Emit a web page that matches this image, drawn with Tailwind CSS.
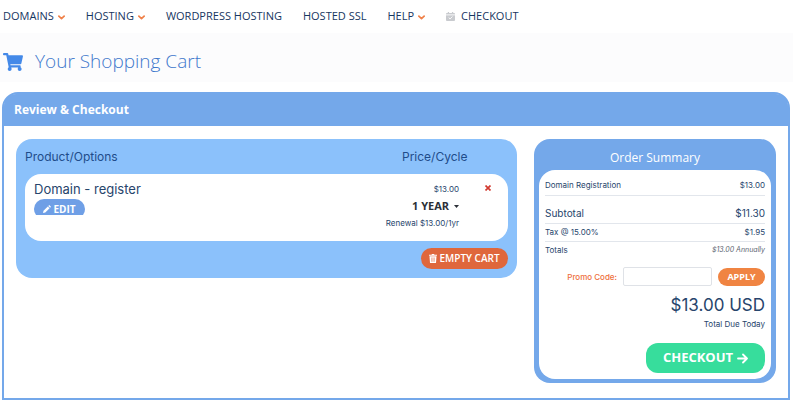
<!DOCTYPE html>
<html lang="en">
<head>
    <meta charset="UTF-8">
    <meta name="viewport" content="width=device-width, initial-scale=1.0">
    <title>Your Shopping Cart</title>
    <script src="https://cdn.jsdelivr.net/npm/@tailwindcss/browser@4"></script>
</head>
<body class="bg-white font-['Open_Sans',sans-serif] text-[#27456c]">
    <!-- Main navigation -->
    <nav class="flex h-[33px] items-center gap-[21px] pl-[3px] text-[11px] font-medium text-[#17365f]">
        <a href="#" class="flex items-center gap-1">DOMAINS
            <svg class="mt-[2px] size-[7px]" viewBox="0 0 8 8" fill="none" stroke="#f0824a" stroke-width="2" stroke-linecap="round" stroke-linejoin="round"><path d="M1 2.5 4 5.3 7 2.5"/></svg>
        </a>
        <a href="#" class="flex items-center gap-1">HOSTING
            <svg class="mt-[2px] size-[7px]" viewBox="0 0 8 8" fill="none" stroke="#f0824a" stroke-width="2" stroke-linecap="round" stroke-linejoin="round"><path d="M1 2.5 4 5.3 7 2.5"/></svg>
        </a>
        <a href="#">WORDPRESS HOSTING</a>
        <a href="#">HOSTED SSL</a>
        <a href="#" class="flex items-center gap-1">HELP
            <svg class="mt-[2px] size-[7px]" viewBox="0 0 8 8" fill="none" stroke="#f0824a" stroke-width="2" stroke-linecap="round" stroke-linejoin="round"><path d="M1 2.5 4 5.3 7 2.5"/></svg>
        </a>
        <a href="#" class="flex items-center gap-[6px]">
            <svg class="size-[9px]" viewBox="0 0 10 10"><path fill="#c9cbcf" d="M2 0h1.400v1h3.200V0H8v1h1q1 0 1 1v7q0 1-1 1H1Q0 10 0 9V2q0-1 1-1h1z"/><path d="M0 3.200h10M3 6.200l1.500 1.500L7.200 5" fill="none" stroke="#fff" stroke-width="1"/></svg>
            CHECKOUT
        </a>
    </nav>

    <!-- Page title -->
    <header class="flex h-[49px] items-center gap-3 bg-[#fcfcfd] pl-[3px] pt-2">
        <svg class="h-[18px] w-5" viewBox="0 0 576 512" fill="#4489e8"><path d="M528.120 301.319l47.273-208C578.806 78.301 567.391 64 551.990 64H159.208l-9.166-44.810C147.758 8.021 137.930 0 126.529 0H24C10.745 0 0 10.745 0 24v16c0 13.255 10.745 24 24 24h69.883l70.248 343.435C147.325 417.100 136 435.222 136 456c0 30.928 25.072 56 56 56s56-25.072 56-56c0-15.674-6.447-29.835-16.824-40h209.647C430.447 426.165 424 440.326 424 456c0 30.928 25.072 56 56 56s56-25.072 56-56c0-22.172-12.888-41.332-31.579-50.405l5.517-24.276c3.413-15.018-8.002-29.319-23.403-29.319H218.117l-6.545-32h293.145c11.206 0 20.920-7.754 23.403-18.681z"/></svg>
        <h1 class="text-[19px] font-light text-[#3f78cc]">Your Shopping Cart</h1>
    </header>

    <main class="ml-[2px] mr-[3px] mt-[10px] rounded-t-2xl border-2 border-[#74a8ea]">
        <h2 class="flex h-8 items-center rounded-t-xl bg-[#74a8ea] pl-[10px] text-xs font-bold text-white">Review &amp; Checkout</h2>

        <div class="flex items-start gap-[17px] px-3 pb-[15px] pt-[13px] font-['Inter',sans-serif]">
            <!-- Cart items -->
            <section class="flex-1 rounded-2xl bg-[#8bc1fb] px-[9px] pb-[9px]">
                <table class="w-full table-fixed">
                    <colgroup>
                        <col>
                        <col class="w-[110px]">
                        <col class="w-[49px]">
                    </colgroup>
                    <thead>
                        <tr class="h-[35px] text-xs text-[#1f4c8a]">
                            <th class="text-left font-normal">Product/Options</th>
                            <th colspan="2" class="pl-[53px] text-left font-normal">Price/Cycle</th>
                        </tr>
                    </thead>
                    <tbody>
                        <tr class="h-[67px] align-top">
                            <td class="rounded-l-2xl bg-white pl-[9px] pt-[6px]">
                                <div class="text-[13px] leading-[18px]">Domain - register</div>
                                <div class="mt-px h-4 overflow-hidden">
                                    <button class="flex h-5 w-[51px] items-center justify-center gap-[2px] rounded-full bg-[#6f9fe6] font-['Open_Sans',sans-serif] text-[10px] font-bold text-white">
                                        <svg class="size-2" viewBox="0 0 8 8" fill="#fff"><path d="M0 8 .500 5.700 4.800 1.400 6.600 3.200 2.300 7.500zM5.300.900 6.200 0 8 1.800 7.100 2.700z"/></svg>
                                        EDIT
                                    </button>
                                </div>
                            </td>
                            <td class="bg-white pt-[9px] text-right text-[8px] leading-3">
                                <div>$13.00</div>
                                <label class="my-px flex h-5 items-center justify-end gap-1 text-[#2c3038]">
                                    <select aria-label="Billing cycle" class="appearance-none font-['Open_Sans',sans-serif] text-[11px] font-bold">
                                        <option>1 YEAR</option>
                                    </select>
                                    <svg class="h-[3px] w-[5px]" viewBox="0 0 5 3" fill="currentColor"><path d="M0 0h5L2.500 3z"/></svg>
                                </label>
                                <div class="whitespace-nowrap">Renewal $13.00/1yr</div>
                            </td>
                            <td class="rounded-r-2xl bg-white pl-[10px] pt-[11px]">
                                <button aria-label="Remove" class="mx-auto block">
                                    <svg class="size-[6px]" viewBox="0 0 6 6" stroke="#d23a30" stroke-width="1.700"><path d="M.500.500l5 5m0-5-5 5"/></svg>
                                </button>
                            </td>
                        </tr>
                    </tbody>
                </table>
                <button class="ml-auto mt-[7px] flex h-[21px] w-[87px] items-center justify-center gap-[2px] rounded-full bg-[#df673c] font-['Open_Sans',sans-serif] text-[10px] font-semibold text-white">
                    <svg class="h-[9px] w-2" viewBox="0 0 8 9"><path fill="#fff" d="M0 .800h2.500L3 0h2l.500.800H8v1H0zM.500 2.300h7L7 9H1z"/><path d="M2.700 3.500v4.300M4 3.500v4.300M5.300 3.500v4.300" stroke="#df673c" stroke-width=".5"/></svg>
                    EMPTY CART
                </button>
            </section>

            <!-- Order summary -->
            <aside class="w-[242px] rounded-2xl bg-[#74a8ea] px-[5px] pb-1">
                <h3 class="flex h-[31px] items-center justify-center pt-[6px] font-['Open_Sans',sans-serif] text-xs text-white">Order Summary</h3>
                <div class="rounded-2xl bg-white px-[6px] pb-[6px] pt-[6px]">
                    <table class="w-full text-[8px]">
                        <tr class="h-[19px] border-b border-[#e2e6ec]">
                            <td>Domain Registration</td>
                            <td class="text-right">$13.00</td>
                        </tr>
                        <tr class="h-7 border-b border-[#e2e6ec] align-bottom text-[10px]">
                            <td class="pb-[2px]">Subtotal</td>
                            <td class="pb-[2px] text-right">$11.30</td>
                        </tr>
                        <tr class="h-[18px] border-b border-[#e2e6ec]">
                            <td>Tax @ 15.00%</td>
                            <td class="text-right">$1.95</td>
                        </tr>
                        <tr class="h-[18px]">
                            <td>Totals</td>
                            <td class="text-right text-[7px] italic text-[#5c6470]">$13.00 Annually</td>
                        </tr>
                    </table>
                    <form class="mt-2 flex items-center justify-end gap-[6px]">
                        <label for="promo" class="text-[8px] font-medium text-[#ee6f3c]">Promo Code:</label>
                        <input id="promo" type="text" class="h-[19px] w-[89px] rounded-xs border border-[#dfe2e7] px-1 text-[8px]">
                        <button type="button" class="h-[18px] w-[47px] rounded-full bg-[#f08442] font-['Open_Sans',sans-serif] text-[9px] font-bold text-white">APPLY</button>
                    </form>
                    <div class="mt-[7px] text-right text-[17px] leading-6">$13.00 USD</div>
                    <div class="text-right text-[8px] leading-[14px]">Total Due Today</div>
                    <button class="ml-auto mt-3 flex h-[30px] w-[119px] items-center justify-center gap-1 rounded-xl bg-[#37dd9c] font-['Open_Sans',sans-serif] text-[13px] font-bold text-white">
                        CHECKOUT
                        <svg class="size-[11px]" viewBox="0 0 11 11" fill="none" stroke="#fff" stroke-width="1.800" stroke-linecap="round" stroke-linejoin="round"><path d="M1 5.500h9M6 1.500l4 4-4 4"/></svg>
                    </button>
                </div>
            </aside>
        </div>
    </main>
</body>
</html>
